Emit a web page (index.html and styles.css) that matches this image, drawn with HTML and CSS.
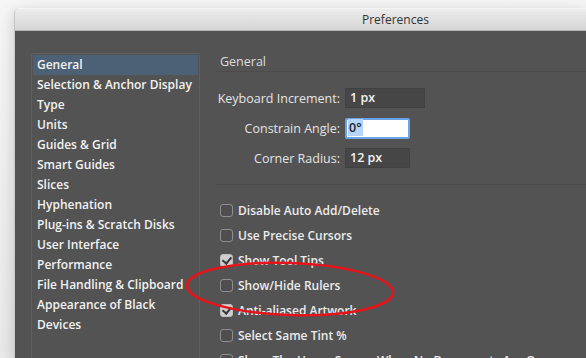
FILE: index.html
```html
<!DOCTYPE html>
<html lang="en">
<head>
    <meta charset="UTF-8">
    <title>Preferences</title>
    <link rel="stylesheet" href="styles.css">
</head>
<body>
    <div class="window">
        <div class="title-bar">Preferences</div>
        <div class="window-body">
            <ul class="category-list">
                <li class="selected">General</li>
                <li>Selection &amp; Anchor Display</li>
                <li>Type</li>
                <li>Units</li>
                <li>Guides &amp; Grid</li>
                <li>Smart Guides</li>
                <li>Slices</li>
                <li>Hyphenation</li>
                <li>Plug-ins &amp; Scratch Disks</li>
                <li>User Interface</li>
                <li>Performance</li>
                <li>File Handling &amp; Clipboard</li>
                <li>Appearance of Black</li>
                <li>Devices</li>
            </ul>
            <div class="panel">
                <div class="panel-title">General</div>
                <div class="fields">
                    <div class="field">
                        <label class="field-label">Keyboard Increment:</label>
                        <div class="input wide">1 px</div>
                    </div>
                    <div class="field">
                        <label class="field-label">Constrain Angle:</label>
                        <div class="input focused"><span class="sel">0°</span></div>
                    </div>
                    <div class="field">
                        <label class="field-label">Corner Radius:</label>
                        <div class="input">12 px</div>
                    </div>
                </div>
                <div class="options">
                    <div class="option"><span class="check"></span>Disable Auto Add/Delete</div>
                    <div class="option"><span class="check"></span>Use Precise Cursors</div>
                    <div class="option"><span class="check on"></span>Show Tool Tips</div>
                    <div class="option"><span class="check"></span>Show/Hide Rulers</div>
                    <div class="option"><span class="check on"></span>Anti-aliased Artwork</div>
                    <div class="option"><span class="check"></span>Select Same Tint %</div>
                    <div class="option"><span class="check"></span>Show The Home Screen When No Documents Are Open</div>
                </div>
            </div>
        </div>
    </div>

    <!-- annotation drawn over the screenshot -->
    <svg class="highlight" width="220" height="62" viewBox="0 0 220 62">
        <ellipse cx="110" cy="31" rx="103" ry="26" fill="none" stroke="#e3151b" stroke-width="2.5" transform="rotate(2 110 31)"/>
    </svg>
</body>
</html>
```

FILE: styles.css
```css
body {
    margin: 0;
    width: 586px;
    height: 358px;
    overflow: hidden;
    position: relative;
    background: linear-gradient(#f6f6f6, #e9e9e9);
    font-family: 'Open Sans', 'Liberation Sans', sans-serif;
    font-size: 12.5px;
}
.window {
    margin: 8px 0 0 14px;
    width: 572px;
    height: 350px;
    border-radius: 5px 0 0 0;
    overflow: hidden;
    box-shadow: 0 4px 16px rgba(0, 0, 0, 0.18);
    border-left: 1px solid #c8c8c8;
}
.title-bar {
    height: 21px;
    line-height: 22px;
    background: linear-gradient(#ececec, #d5d5d5);
    border-bottom: 1px solid #b2b2b2;
    border-top: 1px solid #f4f4f4;
    color: #333;
    font-size: 12px;
    padding-left: 347px;
}
.window-body {
    display: flex;
    background-color: #535353;
    height: 330px;
    padding: 22px 0 0 16px;
}
.category-list {
    list-style: none;
    margin: 0;
    padding: 1px;
    width: 165px;
    height: 340px;
    border: 1px solid #5f5f5f;
    border-radius: 2px;
}
.category-list li {
    height: 20px;
    line-height: 20px;
    padding-left: 4px;
    color: #f2f2f2;
    font-size: 12px;
    font-weight: 600;
    white-space: nowrap;
}
.category-list li.selected {
    background-color: #4c6176;
}
.panel {
    flex: 1;
    margin-left: 16px;
}
.panel-title {
    color: #dcdcdc;
    height: 18px;
    line-height: 18px;
    padding: 0 0 0 4px;
    border-bottom: 1px solid #4b4b4b;
}
.fields {
    display: flex;
    flex-direction: column;
    gap: 10px;
    padding: 16px 0 16px;
    border-bottom: 1px solid #4b4b4b;
}
.field {
    display: flex;
    align-items: center;
    height: 20px;
}
.field-label {
    width: 124px;
    text-align: right;
    color: #e4e4e4;
    margin-right: 5px;
}
.input {
    box-sizing: border-box;
    width: 65px;
    height: 20px;
    line-height: 18px;
    padding-left: 4px;
    background-color: #464646;
    border: 1px solid #414141;
    color: #f2f2f2;
    font-weight: 600;
}
.input.wide {
    width: 80px;
}
.input.focused {
    height: 21px;
    background-color: #fff;
    border: 2px solid #6aa3e8;
    border-radius: 2px;
    color: #222;
    padding-left: 1px;
    line-height: 16px;
}
.sel {
    background-color: #b5d5fb;
    padding: 0 1px;
}
.options {
    padding-top: 13px;
}
.option {
    display: flex;
    align-items: center;
    height: 25px;
    color: #ececec;
    font-size: 12px;
    font-weight: 600;
    white-space: nowrap;
}
.check {
    box-sizing: border-box;
    width: 13px;
    height: 13px;
    margin: 0 5px 0 4px;
    border: 1px solid #8e8e8e;
    border-radius: 3px;
    background-color: #4e4e4e;
    position: relative;
}
.check.on {
    background-color: #cfcfcf;
    border-color: #bdbdbd;
}
.check.on::after {
    content: '';
    position: absolute;
    left: 3px;
    top: 0;
    width: 4px;
    height: 7px;
    border: solid #3a3a3a;
    border-width: 0 2px 2px 0;
    transform: rotate(40deg);
}
.highlight {
    position: absolute;
    left: 180px;
    top: 258px;
}
```
